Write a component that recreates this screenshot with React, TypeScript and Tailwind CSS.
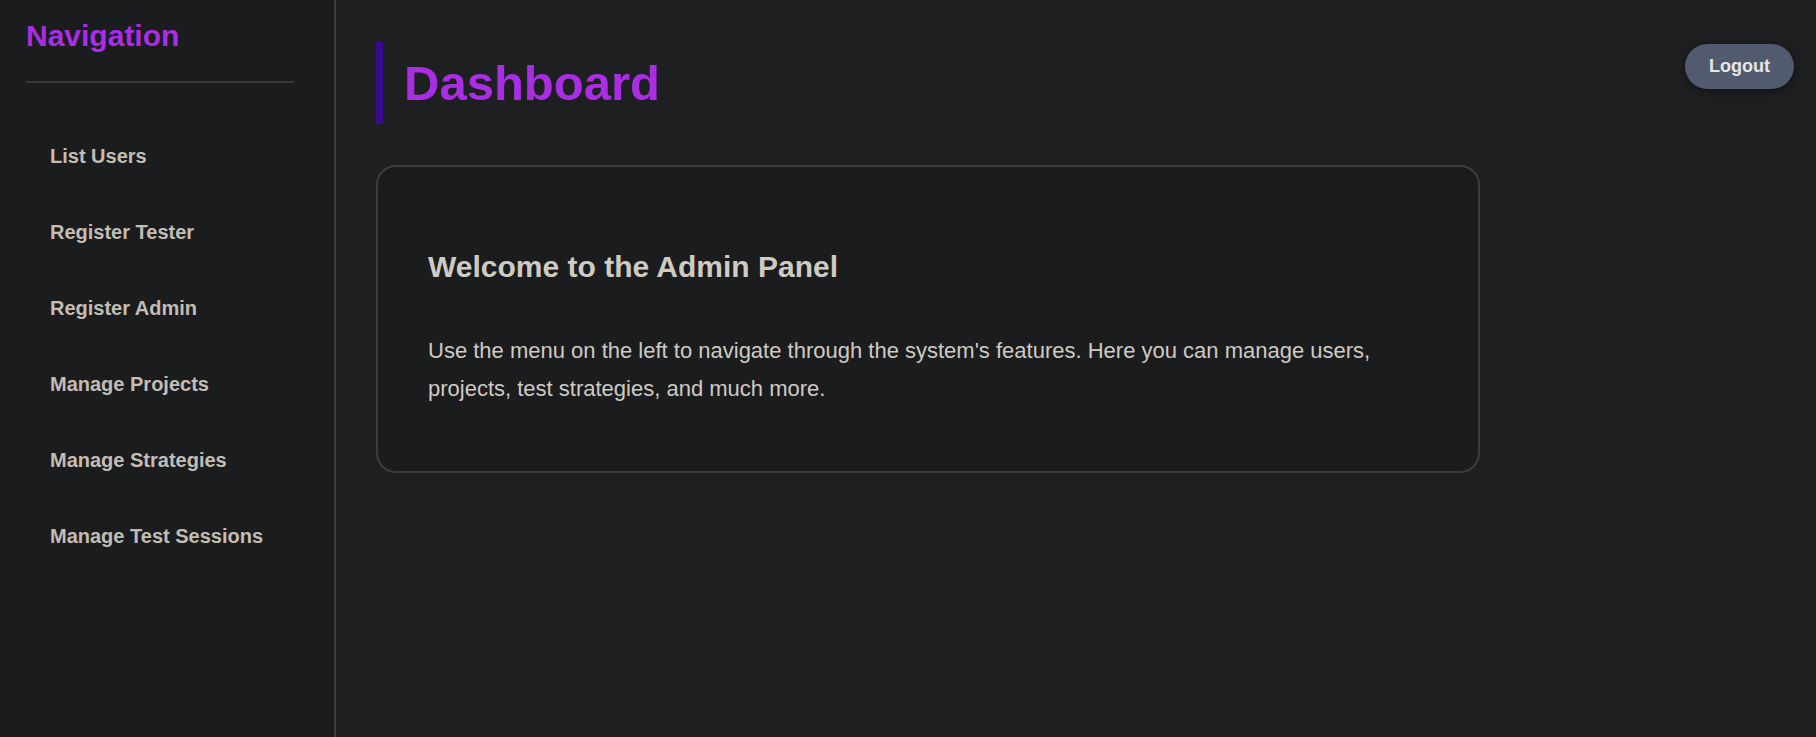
const navItems = [
  'List Users',
  'Register Tester',
  'Register Admin',
  'Manage Projects',
  'Manage Strategies',
  'Manage Test Sessions',
]

export default function App() {
  return (
    <div
      className="flex h-[737px] w-full overflow-hidden bg-[#1e1f21]"
      style={{ fontFamily: '"Liberation Sans", Arial, sans-serif' }}
    >
      {/* Sidebar */}
      <aside className="flex w-[336px] shrink-0 flex-col border-r-2 border-[#3a3c3e] bg-[#1b1c1e] pl-[26px] pr-[40px] pt-[18px]">
        <h2 className="text-[30px] font-bold leading-[36px] text-[#a92de3]">Navigation</h2>
        <div className="mt-[27px] h-[2px] w-[268px] bg-[#353739]" />
        <nav className="mt-[61px] flex flex-col">
          {navItems.map((item) => (
            <a
              key={item}
              href="#"
              className="block h-[76px] pl-[24px] text-[20px] font-bold leading-[24px] text-[#c3bdb3]"
            >
              {item}
            </a>
          ))}
        </nav>
      </aside>

      {/* Main */}
      <main className="flex flex-1 flex-col pl-[40px] pr-[22px] pt-[42px]">
        <div className="flex items-start justify-between">
          <h1 className="border-l-[7px] border-[#3a0b8f] py-[12px] pl-[21px] text-[49px] font-bold leading-[58px] text-[#a92de3]">
            Dashboard
          </h1>
          <button className="mt-[2px] h-[45px] rounded-full bg-[#525a70] px-[24px] text-[18px] font-bold text-[#e8e6e3] shadow-[0_2px_10px_rgba(0,0,0,0.45)]">
            Logout
          </button>
        </div>

        <section className="mt-[41px] w-[1104px] rounded-[20px] border-2 border-[#3a3d3f] bg-[#1b1c1e] pb-[63px] pl-[50px] pr-[48px] pt-[82px]">
          <h2 className="text-[30px] font-bold leading-[36px] text-[#cfcac2]">Welcome to the Admin Panel</h2>
          <p className="mt-[47px] text-[22px] leading-[38px] text-[#cfcac2]">
            Use the menu on the left to navigate through the system's features. Here you can manage users,
            projects, test strategies, and much more.
          </p>
        </section>
      </main>
    </div>
  )
}
